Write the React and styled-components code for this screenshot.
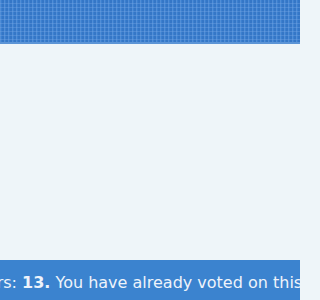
import React from "react";
import styled, { createGlobalStyle } from "styled-components";

const Global = createGlobalStyle`
  html, body { margin: 0; padding: 0; }
  body { height: 300px; overflow: hidden; background: #eef5f9; font-family: "DejaVu Sans", sans-serif; }
`;

const Page = styled.div`
  display: flex;
  flex-direction: column;
  width: 300px;
  height: 300px;
  overflow: hidden;
`;

const Header = styled.div`
  height: 42px;
  flex: none;
  background-color: #3c80d0;
  background-image:
    linear-gradient(90deg, rgba(120,170,230,0.35) 1px, transparent 1px),
    linear-gradient(0deg, rgba(120,170,230,0.35) 1px, transparent 1px),
    linear-gradient(90deg, rgba(30,90,170,0.25) 2px, transparent 2px);
  background-size: 4px 4px, 4px 4px, 4px 4px;
  background-position: 0 0, 0 0, 2px 0;
  border-bottom: 2px solid #5b94d6;
`;

const Body = styled.div`
  flex: 1;
  background: #eef5f9;
`;

const Footer = styled.div`
  height: 40px;
  flex: none;
  background: #3b83cf;
  display: flex;
  justify-content: center;
  align-items: center;
  overflow: hidden;
`;

const FooterText = styled.div`
  white-space: nowrap;
  color: #eef3fb;
  font-family: "DejaVu Sans", sans-serif;
  font-size: 16px;
  line-height: 18px;
  padding-top: 6px;
  padding-right: 40px;
  flex: none;
  b { font-weight: bold; }
`;

export default function App() {
  return (
    <>
      <Global />
      <Page>
        <Header />
        <Body />
        <Footer>
          <FooterText>
            Total voters: <b>13.</b> You have already voted on this poll.
          </FooterText>
        </Footer>
      </Page>
    </>
  );
}
